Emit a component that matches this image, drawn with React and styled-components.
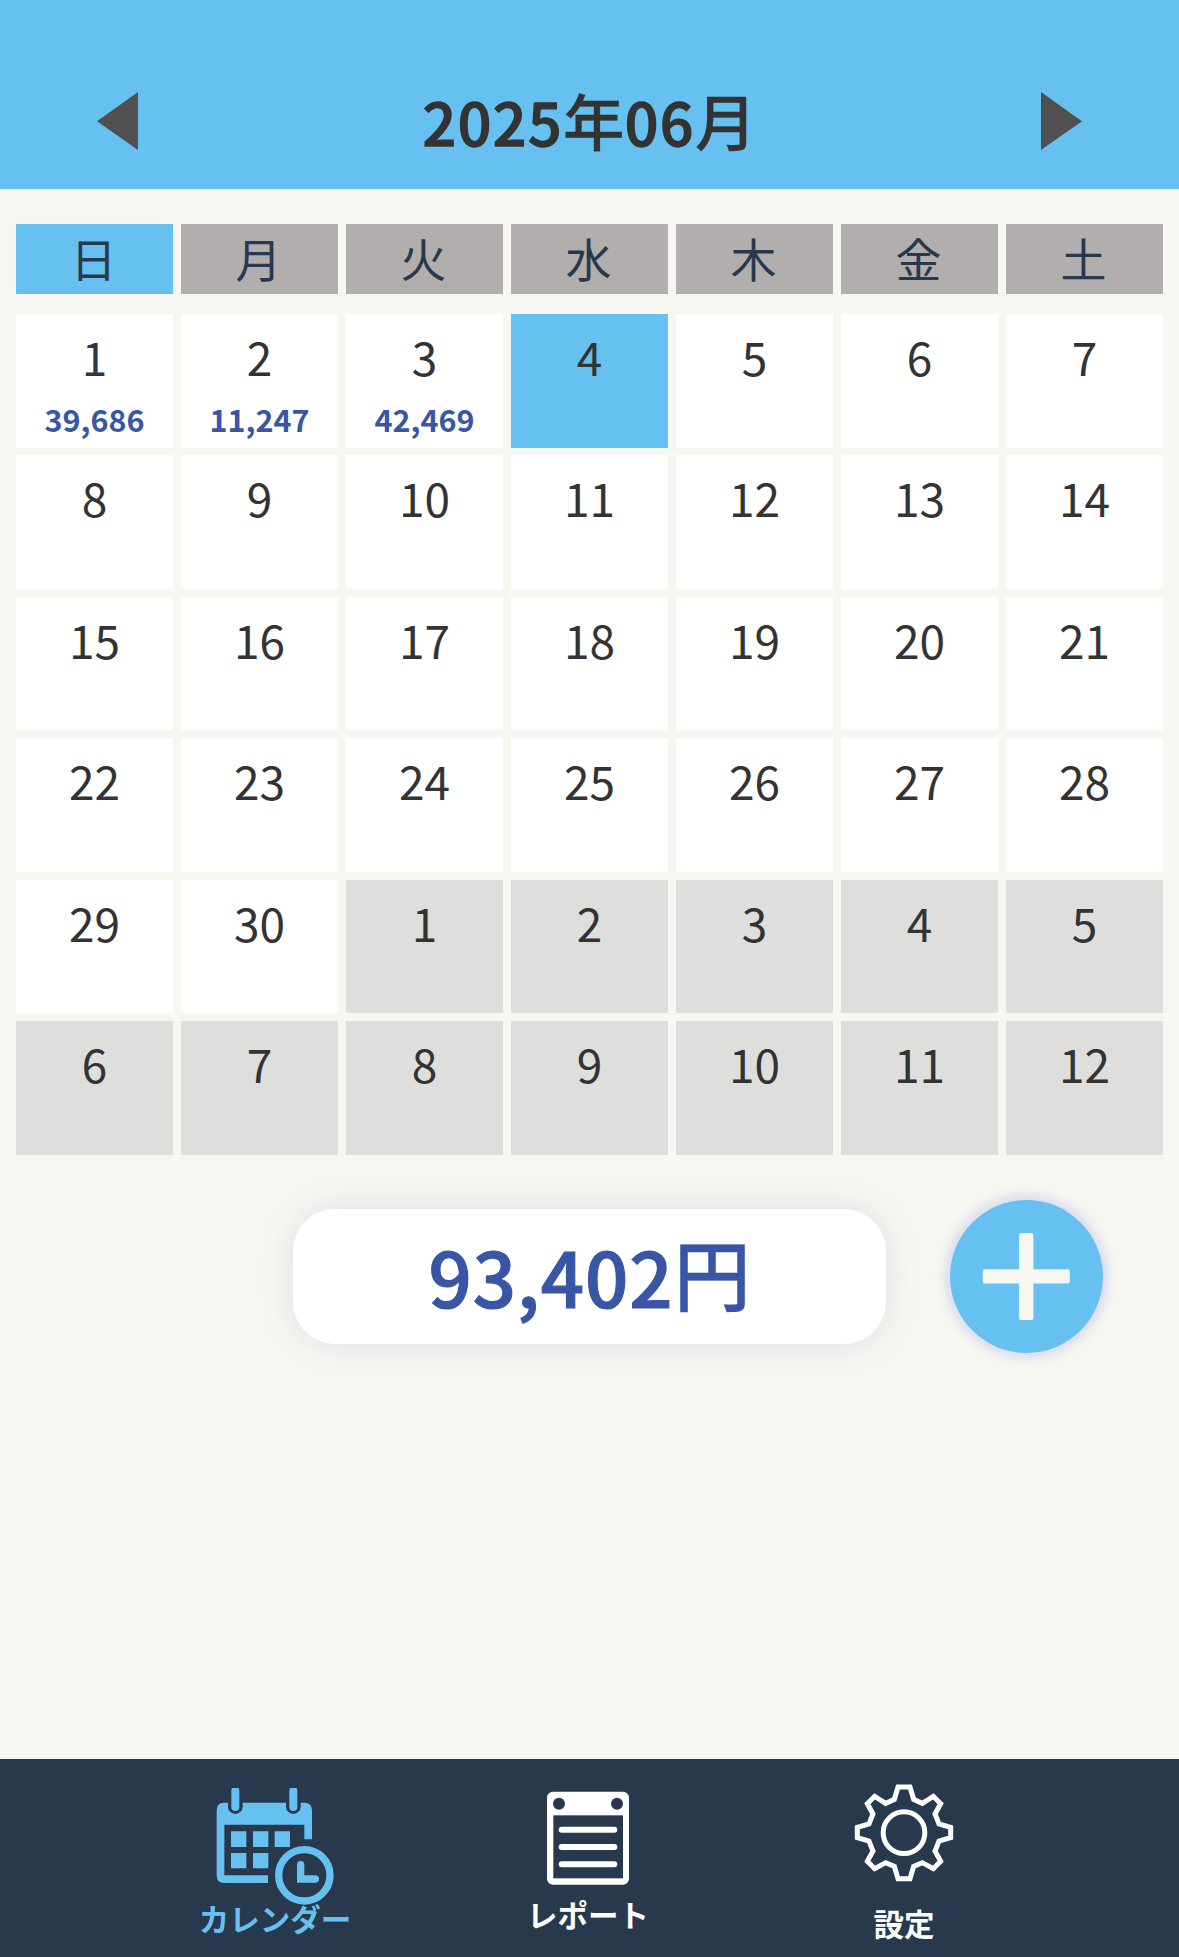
import React from "react";
import styled, { createGlobalStyle } from "styled-components";

const SKY = "#67c1f0";
const NAVY = "#28394e";
const PAPER = "#f6f7f1";
const INK = "#333333";
const BLUE = "#3956a6";

const GlobalStyle = createGlobalStyle`
  * { box-sizing: border-box; }
  body {
    margin: 0;
    background: ${PAPER};
    font-family: "Noto Sans CJK JP", "Noto Sans", sans-serif;
  }
  button { font: inherit; border: 0; padding: 0; background: none; }
`;

const Screen = styled.div`
  display: flex;
  flex-direction: column;
  width: 1179px;
  height: 1957px;
  background: ${PAPER};
  overflow: hidden;
`;

const Header = styled.header`
  display: flex;
  justify-content: space-between;
  align-items: flex-start;
  height: 189px;
  padding: 92px 97px 0;
  background: ${SKY};
`;

const ArrowButton = styled.button`
  display: block;
  width: 41px;
  height: 58px;
  svg { display: block; }
`;

const Title = styled.h1`
  margin: -3px 0 0;
  font-size: 61.5px;
  font-weight: 500;
  line-height: 62px;
  color: ${INK};
  -webkit-text-stroke: 0.3px ${INK};
`;

const Figures = styled.span`
  font-size: ${(p) => p.$size}px;
  letter-spacing: ${(p) => p.$spacing}px;
  -webkit-text-stroke: ${(p) => p.$stroke}px currentColor;
`;

const Unit = styled.span`
  line-height: 1;
  vertical-align: 3px;
`;

const Week = styled.div`
  display: grid;
  grid-template-columns: repeat(7, 157px);
  column-gap: 8px;
  padding: 35px 16px 20px;
`;

const Weekday = styled.div`
  height: 70px;
  padding-right: 2px;
  background: ${(p) => (p.$active ? SKY : "#b2aead")};
  color: ${NAVY};
  font-size: 46px;
  line-height: 67px;
  text-align: center;
`;

const Days = styled.div`
  display: grid;
  grid-template-columns: repeat(7, 157px);
  grid-auto-rows: 133.6px;
  gap: 7.8px 8px;
  padding: 0 16px;
`;

const Day = styled.div`
  display: flex;
  flex-direction: column;
  align-items: center;
  padding-top: 13px;
  background: ${(p) => (p.$selected ? SKY : p.$outside ? "#dededc" : "#ffffff")};
`;

const DayNumber = styled.span`
  font-size: 46px;
  line-height: 58px;
  color: ${(p) => (p.$accent ? NAVY : INK)};
`;

const Amount = styled.span`
  margin-top: 14px;
  font-size: 30.5px;
  line-height: 40px;
  font-weight: 700;
  color: ${BLUE};
`;

const Summary = styled.div`
  display: flex;
  align-items: center;
  gap: 64px;
  padding: 45px 0 0 293px;
`;

const Total = styled.div`
  width: 593px;
  height: 135px;
  border-radius: 42px;
  background: #ffffff;
  box-shadow: 0 0 32px rgba(90, 120, 170, 0.17);
  color: ${BLUE};
  font-size: 77px;
  font-weight: 500;
  line-height: 132px;
  text-align: center;
  -webkit-text-stroke: 0.3px ${BLUE};
`;

const AddButton = styled.button`
  display: block;
  width: 153px;
  height: 153px;
  border-radius: 50%;
  background: ${SKY};
  box-shadow: 0 0 8px 6px rgba(210, 212, 236, 0.7);
  svg { display: block; }
`;

const Nav = styled.nav`
  display: flex;
  align-items: flex-start;
  height: 198px;
  margin-top: auto;
  padding-left: 175px;
  background: ${NAVY};
`;

const NavItem = styled.a`
  display: flex;
  flex-direction: column;
  align-items: center;
  width: ${(p) => p.$width}px;
  padding-top: ${(p) => p.$top}px;
  color: ${(p) => (p.$active ? SKY : "#ffffff")};
  svg { display: block; }
`;

const NavLabel = styled.span`
  margin-top: ${(p) => p.$gap}px;
  font-size: 30.5px;
  line-height: 32px;
  font-weight: 700;
  white-space: nowrap;
`;

const Arrow = ({ points }) => (
  <svg width="41" height="58" viewBox="0 0 41 58">
    <polygon points={points} fill="#505050" />
  </svg>
);

const CalendarIcon = () => (
  <svg width="118" height="117" viewBox="108 113 354 351">
    <path
      fill="currentColor"
      d="M132 157H374Q396 157 396 181V267H373V223H133V375H264V398H132Q110 398 110 375V181Q110 157 132 157Z"
    />
    <g fill="none" strokeLinecap="round">
      <path d="M166 124V169M340 124V169" stroke={NAVY} strokeWidth="44" />
      <path d="M166 122V170M340 122V170" stroke="currentColor" strokeWidth="24" />
    </g>
    <path
      fill="currentColor"
      d="M153 243h46v47h-46zM219 243h46v47h-46zM284 243h46v47h-46zM153 308h46v46h-46zM219 308h46v46h-46z"
    />
    <circle cx="373" cy="375" r="77" fill="none" stroke="currentColor" strokeWidth="22" />
    <path d="M362 343V386H406" fill="none" stroke="currentColor" strokeWidth="22" strokeLinecap="round" />
  </svg>
);

const ReportIcon = () => (
  <svg width="84" height="94" viewBox="138 123 252 282">
    <rect x="141" y="125" width="246" height="279" rx="18" fill="currentColor" />
    <rect x="160" y="196" width="209" height="189" fill={NAVY} />
    <circle cx="177" cy="161" r="18" fill={NAVY} />
    <circle cx="351" cy="161" r="18" fill={NAVY} />
    <path d="M185 239H343M185 291H343M185 343H343" stroke="currentColor" strokeWidth="18" strokeLinecap="round" />
  </svg>
);

const GearIcon = () => (
  <svg width="100" height="98" viewBox="132 102 300 294" fill="none" stroke="currentColor" strokeWidth="15">
    <path d="M264 111H300L311 148L337 160L370 139L392 161L375 192L387 222L422 232V263L387 273L375 303L392 334L370 356L337 338L311 349L300 386H264L253 349L227 338L194 356L172 334L189 303L177 273L142 263V232L177 222L189 192L172 161L194 139L227 160L253 148Z" />
    <circle cx="282" cy="248" r="62.5" />
  </svg>
);

const WEEKDAYS = ["日", "月", "火", "水", "木", "金", "土"];
const AMOUNTS = { 1: "39,686", 2: "11,247", 3: "42,469" };
const TODAY = 4;
const DAYS_IN_MONTH = 30;

const cells = Array.from({ length: 42 }, (_, i) => {
  const outside = i >= DAYS_IN_MONTH;
  return { day: outside ? i - DAYS_IN_MONTH + 1 : i + 1, outside };
});

export default function App() {
  return (
    <Screen>
      <GlobalStyle />
      <Header>
        <ArrowButton aria-label="前の月">
          <Arrow points="41,0 41,58 0,29.3" />
        </ArrowButton>
        <Title>
          <Figures $size={59} $spacing={1.5} $stroke={1.3}>2025</Figures>年
          <Figures $size={59} $spacing={1.5} $stroke={1.3}>06</Figures>月
        </Title>
        <ArrowButton aria-label="次の月">
          <Arrow points="0,0 0,58 41,29.3" />
        </ArrowButton>
      </Header>
      <Week>
        {WEEKDAYS.map((name, i) => (
          <Weekday key={name} $active={i === 0}>{name}</Weekday>
        ))}
      </Week>
      <Days>
        {cells.map(({ day, outside }, i) => (
          <Day key={i} $outside={outside} $selected={!outside && day === TODAY}>
            <DayNumber $accent={i === 0}>{day}</DayNumber>
            {!outside && AMOUNTS[day] && <Amount>{AMOUNTS[day]}</Amount>}
          </Day>
        ))}
      </Days>
      <Summary>
        <Total>
          <Figures $size={76} $spacing={1} $stroke={1.2}>93,402</Figures>
          <Unit>円</Unit>
        </Total>
        <AddButton aria-label="追加">
          <svg width="153" height="153" viewBox="0 0 153 153" fill={PAPER}>
            <rect x="69" y="33" width="14.4" height="87" rx="2" />
            <rect x="32.8" y="69.2" width="87" height="14.4" rx="2" />
          </svg>
        </AddButton>
      </Summary>
      <Nav>
        <NavItem $width={200} $top={29} $active>
          <CalendarIcon />
          <NavLabel $gap={-3}>カレンダー</NavLabel>
        </NavItem>
        <NavItem $width={426} $top={32}>
          <ReportIcon />
          <NavLabel $gap={13}>レポート</NavLabel>
        </NavItem>
        <NavItem $width={206} $top={25}>
          <GearIcon />
          <NavLabel $gap={25}>設定</NavLabel>
        </NavItem>
      </Nav>
    </Screen>
  );
}
